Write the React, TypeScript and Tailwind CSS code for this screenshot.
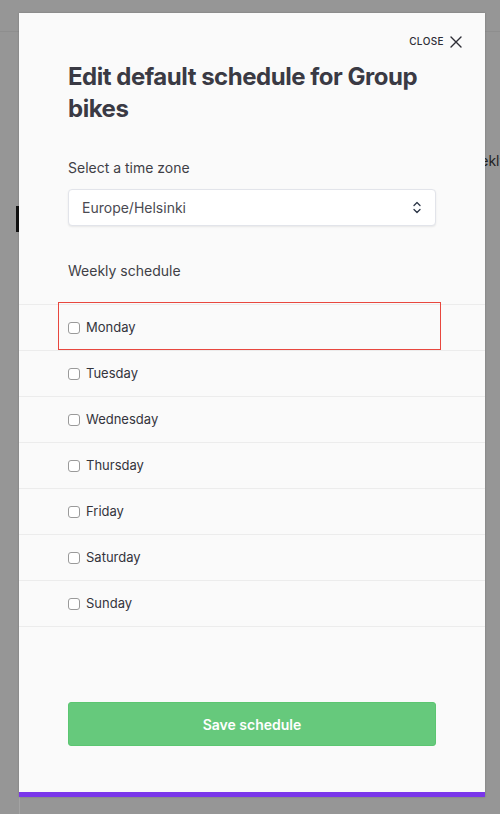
import React from "react";

const days = ["Monday", "Tuesday", "Wednesday", "Thursday", "Friday", "Saturday", "Sunday"];

function UpDown() {
  return (
    <svg width="8" height="13" viewBox="0 0 8 13" fill="none" stroke="#2d3748" strokeWidth="1.3" strokeLinecap="round" strokeLinejoin="round">
      <path d="M1 4.5 4 1.5 7 4.5" />
      <path d="M1 8.5 4 11.5 7 8.5" />
    </svg>
  );
}

export default function App() {
  return (
    <div
      className="relative h-[814px] w-[500px] overflow-hidden bg-[#969696]"
      style={{ fontFamily: "Inter, 'Noto Sans', sans-serif" }}
    >
      {/* page behind the overlay */}
      <div className="absolute left-0 right-0 top-[31px] h-px bg-[#8e8e8e]" />
      <div className="absolute left-[16px] top-[206px] h-[26px] w-[3px] bg-[#111]" />
      <div className="absolute left-[459px] top-[150px] whitespace-nowrap text-[14px] text-[#222]">Weekly</div>
      <div className="absolute left-[19px] top-[797px] h-[17px] w-px bg-[#a3a3a3]" />

      <div className="relative pl-[19px] pt-[13px]">
        <div className="flex h-[784px] w-[466px] flex-col border-b-[5px] border-[#7a36ea] bg-[#fafafa] shadow-[0_0_2px_rgba(0,0,0,0.2)]">
          <div className="flex items-center justify-end gap-[6px] pr-[23px] pt-[21px]">
            <span className="text-[10px] font-medium uppercase tracking-[0.04em] text-[#2d2d35]">Close</span>
            <svg width="12" height="12" viewBox="0 0 12 12" stroke="#2d2d35" strokeWidth="1.4" strokeLinecap="round">
              <path d="M1 1 11 11M11 1 1 11" />
            </svg>
          </div>

          <div className="px-[49px]">
            <h1 className="mt-[12px] text-[24px] font-bold leading-[32px] tracking-[-0.02em] text-[#3a3a44]">
              Edit default schedule for Group bikes
            </h1>

            <p className="mt-[33px] text-[14px] leading-[20px] text-[#3f3f46]">Select a time zone</p>

            <div className="mt-[11px] flex h-[37px] items-center justify-between rounded-[4px] border border-[#e2e4ea] bg-white pl-[13px] pr-[14px] shadow-[0_1px_2px_rgba(0,0,0,0.08)]">
              <span className="text-[14px] text-[#4a4a52]">Europe/Helsinki</span>
              <UpDown />
            </div>

            <p className="mt-[35px] text-[14px] leading-[20px] text-[#3f3f46]">Weekly schedule</p>
          </div>

          <div className="mt-[23px] border-t border-[#ececec]">
            {days.map((d, i) => (
              <div key={d} className="relative flex h-[46px] items-center border-b border-[#ececec] pl-[49px]">
                <span className="h-[12px] w-[12px] rounded-[3px] border border-[#9a9a9a] bg-white" />
                <span className="ml-[6px] text-[13px] text-[#34343c]">{d}</span>
                {i === 0 && (
                  <div className="absolute left-[39px] top-[-3px] h-[48px] w-[383px] border border-[#e8473e]" />
                )}
              </div>
            ))}
          </div>

          <div className="mt-auto px-[49px] pb-[46px]">
            <button className="flex h-[44px] w-full items-center justify-center rounded-[3px] border border-[#5bc671] bg-[#66c97c] text-[14px] font-semibold text-white">
              Save schedule
            </button>
          </div>
        </div>
      </div>
    </div>
  );
}
